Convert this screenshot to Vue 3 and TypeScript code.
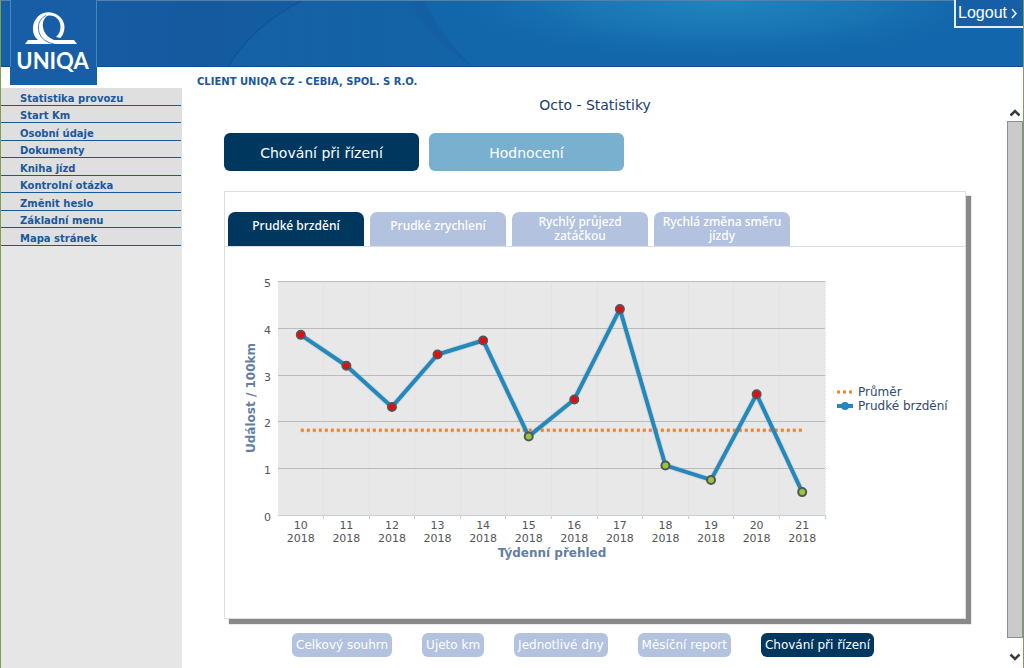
<script setup lang="ts">
import { ref } from 'vue'

interface Week {
  week: number
  year: number
  value: number
}

const menu: string[] = [
  'Statistika provozu',
  'Start Km',
  'Osobní údaje',
  'Dokumenty',
  'Kniha jízd',
  'Kontrolní otázka',
  'Změnit heslo',
  'Základní menu',
  'Mapa stránek',
]
const modes: string[] = ['Chování při řízení', 'Hodnocení']
const tabs: string[] = ['Prudké brzdění', 'Prudké zrychlení', 'Rychlý průjezd zatáčkou', 'Rychlá změna směru jízdy']
const reports: string[] = ['Celkový souhrn', 'Ujeto km', 'Jednotlivé dny', 'Měsíční report', 'Chování při řízení']

const mode = ref(0)
const tab = ref(0)
const report = ref(4)

const values: number[] = [3.86, 3.2, 2.32, 3.44, 3.74, 1.69, 2.48, 4.41, 1.07, 0.76, 2.59, 0.5]
const weeks: Week[] = values.map((value, i) => ({ week: 10 + i, year: 2018, value }))
const average = 1.82

const plot = { left: 53, right: 600, top: 34, bottom: 268 }
const step = (plot.right - plot.left) / weeks.length
const x = (i: number): number => plot.left + step * (i + 0.5)
const y = (v: number): number => plot.bottom + 0.5 - ((plot.bottom - plot.top) * v) / 5
const line = weeks.map((w, i) => `${x(i)},${y(w.value)}`).join(' ')
const scale = [0, 1, 2, 3, 4, 5]
const edge = (n: number): number => Math.floor(plot.left + step * n) + 0.5
const gridY = (v: number): number => Math.floor(y(v)) + 0.5
</script>

<template>
  <div class="page">
    <header class="banner">
      <svg class="banner-art" viewBox="0 0 1022 67" preserveAspectRatio="none" aria-hidden="true">
        <defs>
          <linearGradient id="base" x1="0" x2="1" y1="0" y2="0">
            <stop offset="0" stop-color="#185ea6" />
            <stop offset="0.2" stop-color="#155a9f" />
            <stop offset="0.5" stop-color="#1265a9" />
            <stop offset="1" stop-color="#1263a9" />
          </linearGradient>
          <radialGradient id="glow" cx="0.5" cy="0" r="0.5" gradientTransform="translate(0 0) scale(1 2)">
            <stop offset="0" stop-color="#2085bf" />
            <stop offset="0.5" stop-color="#1c78b6" stop-opacity="0.8" />
            <stop offset="1" stop-color="#1265a9" stop-opacity="0" />
          </radialGradient>
          <linearGradient id="fold" x1="0" x2="1" y1="0" y2="0">
            <stop offset="0" stop-color="#1568ac" />
            <stop offset="1" stop-color="#1568ac" stop-opacity="0" />
          </linearGradient>
        </defs>
        <rect width="1022" height="67" fill="url(#base)" />
        <path d="M302 0Q252 25 227 67H470V0Z" fill="url(#fold)" opacity="0.5" />
        <path d="M302 0Q252 25 227 67" fill="none" stroke="#134f93" stroke-width="1.5" opacity="0.6" />
        <path d="M420 0Q436 36 472 67H1022V0Z" fill="#126aae" opacity="0.5" />
        <rect x="420" width="602" height="67" fill="url(#glow)" />
        <path d="M408 0Q426 38 472 67Q438 34 424 0Z" fill="#155ba1" opacity="0.6" />
        <path d="M0 0.5H1022" stroke="#5482a6" />
        <path d="M0 66.5H1022" stroke="#0d4f93" />
      </svg>
      <a class="logo" href="#" aria-label="UNIQA">
        <svg width="87" height="85" viewBox="10 0 87 85">
          <rect x="10" y="0" width="87" height="85" fill="#175ea7" />
          <path d="M10.500 0V67M96.500 0V67" stroke="#4b86bf" />
          <path
            d="M25 44L28 40H38C34.500 37 32.500 32.500 33 27C34 18 41 12 49 12.300C58 12.800 65 20 64.500 28C64 33 62.500 35.500 60.500 38L56 37C59 34 60.500 31 60.500 27C60.500 20 56 15.500 49.500 15.500C46 15.500 43 17.500 41.500 20.500C39.500 24 39.500 30 42 34C45 38.500 49 40 54 40H74L77 44Z"
            fill="#fff"
          />
          <path
            d="M49 14.500C43.500 18 42.500 22 43 27C43.500 32 47 37 54 40L50 42C43 40 38.500 34 38.500 27C38.500 20 42 15.500 49 14.500Z"
            fill="#fff"
          />
          <path d="M46 15.500C36 20 36 34 45 40.500Q49 43 54 44" fill="none" stroke="#175ea7" stroke-width="0.8" />
          <text x="52.500" y="69" text-anchor="middle" class="logo-name">UNIQA</text>
        </svg>
      </a>
      <a class="logout" href="#">Logout
        <svg width="7" height="11" viewBox="0 0 7 11" aria-hidden="true">
          <path d="M1 1L5 5.500L1 10" fill="none" stroke="#fff" stroke-width="1.500" />
        </svg>
      </a>
    </header>

    <div class="body">
      <nav class="side">
        <ul>
          <li v-for="item in menu" :key="item"><a href="#">{{ item }}</a></li>
        </ul>
      </nav>

      <main class="main">
        <p class="client">CLIENT UNIQA CZ - CEBIA, SPOL. S R.O.</p>
        <div class="frame">
          <div class="content">
            <h1>Octo - Statistiky</h1>
            <div class="modes">
              <button
                v-for="(name, i) in modes"
                :key="name"
                type="button"
                class="mode"
                :class="{ active: mode === i }"
                @click="mode = i"
              >{{ name }}</button>
            </div>

            <section class="panel">
              <div class="tabs" role="tablist">
                <button
                  v-for="(name, i) in tabs"
                  :key="name"
                  type="button"
                  role="tab"
                  class="tab"
                  :class="{ active: tab === i }"
                  :aria-selected="tab === i"
                  @click="tab = i"
                ><span>{{ name }}</span></button>
              </div>

              <svg class="chart" viewBox="0 0 740 371" role="img" aria-label="Prudké brzdění">
                <rect :x="plot.left" :y="plot.top" :width="plot.right - plot.left" :height="plot.bottom - plot.top" fill="#e8e8e8" />
                <line
                  v-for="n in weeks.length"
                  :key="'v' + n"
                  :x1="edge(n)" :x2="edge(n)" :y1="plot.top" :y2="plot.bottom"
                  class="grid-v"
                />
                <line
                  v-for="n in weeks.length"
                  :key="'t' + n"
                  :x1="edge(n)" :x2="edge(n)" :y1="plot.bottom" :y2="plot.bottom + 4"
                  class="tick"
                />
                <g v-for="v in scale" :key="'s' + v">
                  <line :x1="plot.left" :x2="plot.right" :y1="gridY(v)" :y2="gridY(v)" :class="v ? 'grid-h' : 'tick'" />
                  <text x="46" :y="gridY(v) + 5" text-anchor="end" class="label">{{ v }}</text>
                </g>
                <line :x1="x(0)" :x2="x(11) + 1" :y1="y(average)" :y2="y(average)" class="average-shadow" />
                <line :x1="x(0)" :x2="x(11) + 1" :y1="y(average)" :y2="y(average)" class="average" />
                <polyline :points="line" class="series-shadow" />
                <polyline :points="line" class="series" />
                <g v-for="(w, i) in weeks" :key="w.week">
                  <circle :cx="x(i)" :cy="y(w.value)" r="4" :fill="w.value > average ? '#f0060c' : '#92c83e'" class="point" />
                  <text :x="x(i)" y="282" text-anchor="middle" class="label">{{ w.week }}</text>
                  <text :x="x(i)" y="295" text-anchor="middle" class="label">{{ w.year }}</text>
                </g>
                <text x="327" y="310" text-anchor="middle" class="axis">Týdenní přehled</text>
                <text transform="translate(30 151) rotate(-90)" text-anchor="middle" class="axis">Událost / 100km</text>
                <line x1="612" x2="628" y1="145" y2="145" class="legend-average" />
                <text x="633" y="149" class="legend">Průměr</text>
                <line x1="612" x2="628" y1="159" y2="159" class="series" />
                <circle cx="620" cy="159" r="4" fill="#2389bd" />
                <text x="633" y="163" class="legend">Prudké brzdění</text>
              </svg>
            </section>

            <div class="reports">
              <button
                v-for="(name, i) in reports"
                :key="name"
                type="button"
                class="report"
                :class="{ active: report === i }"
                @click="report = i"
              >{{ name }}</button>
            </div>
          </div>

          <div class="scrollbar">
            <button type="button" aria-label="Nahoru">
              <svg width="12" height="9" viewBox="0 0 12 9"><path d="M1.500 7.500L6 3L10.500 7.500" /></svg>
            </button>
            <div class="thumb"></div>
            <button type="button" aria-label="Dolů">
              <svg width="12" height="9" viewBox="0 0 12 9"><path d="M1.500 1.500L6 6L10.500 1.500" /></svg>
            </button>
          </div>
        </div>
      </main>
    </div>
  </div>
</template>

<style>
body {
  margin: 0;
  background: #fff;
}
</style>

<style scoped>
* {
  box-sizing: border-box;
}
.page {
  display: flex;
  flex-direction: column;
  min-height: 100vh;
  border-left: 1px solid #7ea04d;
  border-right: 1px solid #7ea04d;
  font-family: Verdana, "DejaVu Sans", sans-serif;
}
button {
  font-family: inherit;
  border: 0;
  padding: 0;
  cursor: pointer;
}
.banner {
  position: relative;
  height: 67px;
  display: flex;
  justify-content: flex-end;
  align-items: flex-start;
}
.banner-art {
  position: absolute;
  inset: 0;
  width: 100%;
  height: 100%;
}
.logo {
  position: absolute;
  left: 9px;
  top: 0;
  line-height: 0;
}
.logo-name {
  font: bold 22px Lato, sans-serif;
  fill: #fff;
}
.logout {
  position: relative;
  display: flex;
  align-items: center;
  gap: 4px;
  height: 28px;
  padding: 0 5px 0 2px;
  border-left: 2px solid #e4eef8;
  border-bottom: 2px solid #e4eef8;
  background: #165fa6;
  color: #fff;
  font: 16px/24px "Liberation Sans", Arial, sans-serif;
  text-decoration: none;
}
.body {
  flex: 1;
  display: flex;
}
.side {
  width: 181px;
  margin-top: 21px;
  background: #e6e6e6;
}
.side ul {
  display: grid;
  grid-auto-rows: 1fr;
  height: 158px;
  margin: 0;
  padding: 0 1px 0 0;
  list-style: none;
  background: #dfdfdf;
}
.side li {
  display: flex;
  align-items: flex-end;
  padding-left: 19px;
  border-bottom: 1px solid #175a9c;
}
.side a {
  color: #1a589b;
  font-size: 10px;
  line-height: 13px;
  font-weight: bold;
  text-decoration: none;
}
.main {
  flex: 1;
  display: flex;
  flex-direction: column;
  min-width: 0;
}
.client {
  margin: 8px 0 0 15px;
  color: #1a589b;
  font-size: 10px;
  line-height: 14px;
  font-weight: bold;
}
.frame {
  flex: 1;
  display: flex;
  margin-top: 7px;
}
.content {
  flex: 1;
  min-width: 0;
  padding: 0 41px 11px 42px;
}
h1 {
  margin: 0;
  color: #1d3c6b;
  font-size: 14px;
  line-height: 18px;
  font-weight: normal;
  text-align: center;
}
.modes {
  display: flex;
  gap: 10px;
  margin-top: 19px;
}
.mode {
  width: 195px;
  height: 38px;
  padding-top: 2px;
  border-radius: 6px;
  background: #79b0d0;
  color: #fff;
  font-size: 14px;
}
.active.active {
  background: #00375f;
}
.panel {
  margin-top: 20px;
  border: 1px solid #dedede;
  background: #fff;
  box-shadow: 5px 5px 1px #898989;
}
.tabs {
  display: flex;
  gap: 6px;
  padding: 20px 3px 0;
  border-bottom: 1px solid #dedede;
}
.tab {
  display: flex;
  align-items: flex-start;
  justify-content: center;
  width: 136px;
  height: 34px;
  padding-top: 3px;
  border-radius: 7px 7px 0 0;
  background: #b2c2df;
  color: #fff;
  font: 500 12px/14px "Noto Sans", sans-serif;
}
.tab span {
  display: flex;
  align-items: center;
  min-height: 22px;
}
.chart {
  display: block;
  width: 100%;
  height: auto;
}
.grid-v {
  stroke: #dedede;
  stroke-dasharray: 1 1;
}
.grid-h {
  stroke: #b8bcbc;
}
.tick {
  stroke: #c4d0dc;
}
.label {
  fill: #555;
  font-size: 11px;
}
.axis {
  fill: #63809f;
  font-size: 12px;
  font-weight: bold;
}
.legend {
  fill: #304a6c;
  font-size: 12px;
}
.series,
.series-shadow {
  fill: none;
  stroke: #2389bd;
  stroke-width: 4;
  stroke-linejoin: round;
}
.series-shadow {
  stroke: #888;
  stroke-width: 6;
  opacity: 0.15;
}
.average,
.average-shadow,
.legend-average {
  stroke: #ee8330;
  stroke-width: 3;
  stroke-dasharray: 3 3;
}
.average-shadow {
  stroke: #b9a08c;
  stroke-width: 4;
  opacity: 0.3;
}
.point {
  stroke: #555;
  stroke-width: 2;
}
.reports {
  display: flex;
  gap: 30px;
  margin: 14px 0 0 68px;
}
.report {
  height: 24px;
  padding: 0 4px;
  border-radius: 6px;
  background: #b2c2df;
  color: #fff;
  font-size: 12px;
  white-space: nowrap;
}
.scrollbar {
  display: flex;
  flex-direction: column;
  width: 16px;
  padding-top: 7px;
}
.scrollbar button {
  display: flex;
  align-items: center;
  justify-content: center;
  height: 18px;
  background: transparent;
}
.scrollbar button:last-child {
  height: 30px;
  padding-top: 8px;
}
.scrollbar path {
  fill: none;
  stroke: #3d3d3d;
  stroke-width: 2.5;
}
.thumb {
  flex: 1;
  border: 1px solid #8d8d8d;
  background: #cacaca;
}
</style>
